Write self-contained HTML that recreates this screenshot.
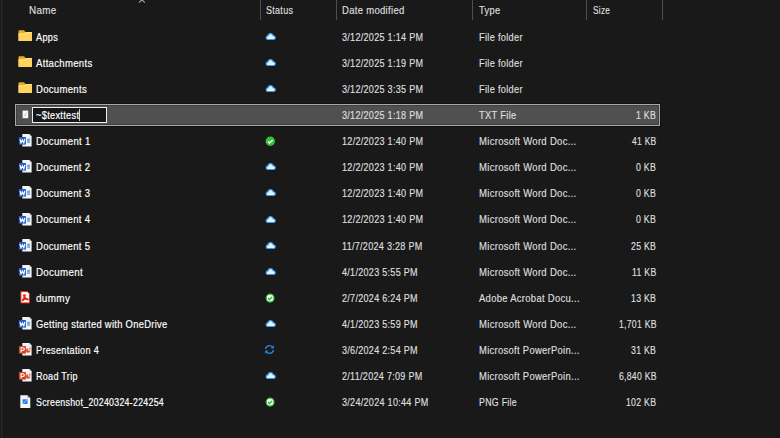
<!DOCTYPE html>
<html><head><meta charset="utf-8">
<style>
html,body{margin:0;padding:0;width:780px;height:438px;overflow:hidden;background:#191919;}
body{position:relative;font-family:"Liberation Sans",sans-serif;font-size:11px;color:#fff;}
.t{position:absolute;white-space:nowrap;line-height:13px;height:13px;transform-origin:0 0;-webkit-text-stroke:0.18px currentColor;letter-spacing:0.35px;}
.h{color:#dedede;}
.n{color:#ffffff;}
.d{color:#dedede;}
.sep{position:absolute;top:0;width:1px;height:20px;background:#4e4e4e;}
.sel{position:absolute;left:15px;top:104px;width:643px;height:20px;border:1px solid #a8a8a8;background:#505050;box-shadow:0 0 0 1px #101010, inset 0 0 0 1px #404040;}
.edit{position:absolute;left:32px;top:107px;width:73px;height:14px;border:1px solid #f0f0f0;background:#171717;}
.caret{position:absolute;left:79px;top:109px;width:1px;height:12px;background:#d8d8d8;}
.ic{position:absolute;display:block;}
</style></head><body>
<div style="position:absolute;left:1px;top:0;width:2px;height:438px;background:#242424"></div>
<div style="position:absolute;left:3px;top:0;width:1px;height:438px;background:#151515"></div>
<svg style="position:absolute;left:137px;top:-3px" width="10" height="8" viewBox="0 0 10 8"><path d="M2 5.6 L4.9 2.7 L7.8 5.6" stroke="#a8a8a8" stroke-width="1.1" fill="none"/></svg>
<div class="sep" style="left:260px"></div>
<div class="sep" style="left:336px"></div>
<div class="sep" style="left:472px"></div>
<div class="sep" style="left:586px"></div>
<div class="sep" style="left:662px"></div>
<div class="t h" style="left:29.0px;top:4px;transform:scaleX(0.899)">Name</div>
<div class="t h" style="left:266.0px;top:4px;transform:scaleX(0.818)">Status</div>
<div class="t h" style="left:342.0px;top:4px;transform:scaleX(0.864)">Date modified</div>
<div class="t h" style="left:479.0px;top:4px;transform:scaleX(0.850)">Type</div>
<div class="t h" style="left:592.5px;top:4px;transform:scaleX(0.757)">Size</div>
<div class="sel"></div>
<div class="edit"></div>
<svg class="ic" style="left:18px;top:30px" width="15" height="12" viewBox="0 0 15 12">
<path d="M0.5 1.2 Q0.5 0.3 1.4 0.3 H6 L7.4 2 H13.2 Q14 2 14 2.8 V10.5 Q14 11 13.4 11 H1.1 Q0.5 11 0.5 10.4Z" fill="#eeab25"/>
<path d="M0.5 3.6 H6.2 L7.8 1.9 H13.2 Q14 1.9 14 2.7 V10.4 Q14 11 13.4 11 H1.1 Q0.5 11 0.5 10.4Z" fill="#ffd45e"/>
<path d="M0.5 3.6 H6.2 L7.8 1.9 H14 V2.7 H8.2 L6.6 4.4 H0.5Z" fill="#ffe494"/>
</svg>
<svg class="ic" style="left:264.5px;top:32.1px" width="12" height="9" viewBox="0 0 12 9">
<path d="M2.4 7.5 A1.85 1.85 0 0 1 2.9 3.9 A2.75 2.75 0 0 1 8.3 3.8 A1.9 1.9 0 0 1 9 7.5 Z" fill="#e4f1ff" stroke="#3b9ae6" stroke-width="1.15"/>
</svg>
<div class="t n" style="left:35.5px;top:31px;transform:scaleX(0.832)">Apps</div>
<div class="t d" style="left:342.0px;top:31px;transform:scaleX(0.822)">3/12/2025 1:14 PM</div>
<div class="t d" style="left:478.5px;top:31px;transform:scaleX(0.840)">File folder</div>
<svg class="ic" style="left:18px;top:56px" width="15" height="12" viewBox="0 0 15 12">
<path d="M0.5 1.2 Q0.5 0.3 1.4 0.3 H6 L7.4 2 H13.2 Q14 2 14 2.8 V10.5 Q14 11 13.4 11 H1.1 Q0.5 11 0.5 10.4Z" fill="#eeab25"/>
<path d="M0.5 3.6 H6.2 L7.8 1.9 H13.2 Q14 1.9 14 2.7 V10.4 Q14 11 13.4 11 H1.1 Q0.5 11 0.5 10.4Z" fill="#ffd45e"/>
<path d="M0.5 3.6 H6.2 L7.8 1.9 H14 V2.7 H8.2 L6.6 4.4 H0.5Z" fill="#ffe494"/>
</svg>
<svg class="ic" style="left:264.5px;top:58.1px" width="12" height="9" viewBox="0 0 12 9">
<path d="M2.4 7.5 A1.85 1.85 0 0 1 2.9 3.9 A2.75 2.75 0 0 1 8.3 3.8 A1.9 1.9 0 0 1 9 7.5 Z" fill="#e4f1ff" stroke="#3b9ae6" stroke-width="1.15"/>
</svg>
<div class="t n" style="left:35.5px;top:57px;transform:scaleX(0.870)">Attachments</div>
<div class="t d" style="left:342.0px;top:57px;transform:scaleX(0.822)">3/12/2025 1:19 PM</div>
<div class="t d" style="left:478.5px;top:57px;transform:scaleX(0.840)">File folder</div>
<svg class="ic" style="left:18px;top:82px" width="15" height="12" viewBox="0 0 15 12">
<path d="M0.5 1.2 Q0.5 0.3 1.4 0.3 H6 L7.4 2 H13.2 Q14 2 14 2.8 V10.5 Q14 11 13.4 11 H1.1 Q0.5 11 0.5 10.4Z" fill="#eeab25"/>
<path d="M0.5 3.6 H6.2 L7.8 1.9 H13.2 Q14 1.9 14 2.7 V10.4 Q14 11 13.4 11 H1.1 Q0.5 11 0.5 10.4Z" fill="#ffd45e"/>
<path d="M0.5 3.6 H6.2 L7.8 1.9 H14 V2.7 H8.2 L6.6 4.4 H0.5Z" fill="#ffe494"/>
</svg>
<svg class="ic" style="left:264.5px;top:84.1px" width="12" height="9" viewBox="0 0 12 9">
<path d="M2.4 7.5 A1.85 1.85 0 0 1 2.9 3.9 A2.75 2.75 0 0 1 8.3 3.8 A1.9 1.9 0 0 1 9 7.5 Z" fill="#e4f1ff" stroke="#3b9ae6" stroke-width="1.15"/>
</svg>
<div class="t n" style="left:35.5px;top:83px;transform:scaleX(0.867)">Documents</div>
<div class="t d" style="left:342.0px;top:83px;transform:scaleX(0.822)">3/12/2025 3:35 PM</div>
<div class="t d" style="left:478.5px;top:83px;transform:scaleX(0.840)">File folder</div>
<svg class="ic" style="left:22px;top:110px" width="7" height="9" viewBox="0 0 7 9">
<rect x="0.6" y="0.6" width="5.6" height="7.6" fill="#fafafa"/>
<path d="M2 6.5 L5 2.5" stroke="#8cc8f0" stroke-width="1"/>
</svg>
<div class="t n" style="left:35.5px;top:109px;transform:scaleX(0.841)">~$texttest</div>
<div class="t d" style="left:342.0px;top:109px;transform:scaleX(0.822)">3/12/2025 1:18 PM</div>
<div class="t d" style="left:478.5px;top:109px;transform:scaleX(0.849)">TXT File</div>
<div class="t d" style="left:636.3px;top:109px;transform:scaleX(0.795)">1 KB</div>
<svg class="ic" style="left:18px;top:134px" width="15" height="14" viewBox="0 0 15 14">
<path d="M4.3 0.1 H11.4 L13.6 2.3 V12.4 H4.3Z" fill="#f4f4f4"/>
<path d="M11.4 0.1 V2.3 H13.6Z" fill="#c4c4c4"/>
<rect x="9.2" y="4.8" width="2.7" height="3.9" fill="#b9d6f5"/>
<rect x="9.2" y="4.8" width="2.7" height="1" fill="#4d94e0"/><rect x="9.2" y="6.3" width="2.7" height="1" fill="#4d94e0"/><rect x="9.2" y="7.8" width="2.7" height="0.9" fill="#4d94e0"/>
<rect x="0.9" y="3" width="7" height="7.6" fill="#1f5dc6"/>
<path d="M2 4.9 L3 8.8 L4.4 5.9 L5.8 8.8 L6.8 4.9" stroke="#fff" stroke-width="1.15" fill="none"/>
</svg>
<svg class="ic" style="left:264.5px;top:136px" width="11" height="11" viewBox="0 0 11 11">
<circle cx="5.3" cy="5.3" r="4.7" fill="#36c13c"/>
<path d="M3 5.6 L4.6 7 L7.6 4" stroke="#fff" stroke-width="1.3" fill="none"/>
</svg>
<div class="t n" style="left:35.5px;top:135px;transform:scaleX(0.869)">Document 1</div>
<div class="t d" style="left:342.0px;top:135px;transform:scaleX(0.822)">12/2/2023 1:40 PM</div>
<div class="t d" style="left:478.5px;top:135px;transform:scaleX(0.864)">Microsoft Word Doc...</div>
<div class="t d" style="left:631.9px;top:135px;transform:scaleX(0.774)">41 KB</div>
<svg class="ic" style="left:18px;top:160px" width="15" height="14" viewBox="0 0 15 14">
<path d="M4.3 0.1 H11.4 L13.6 2.3 V12.4 H4.3Z" fill="#f4f4f4"/>
<path d="M11.4 0.1 V2.3 H13.6Z" fill="#c4c4c4"/>
<rect x="9.2" y="4.8" width="2.7" height="3.9" fill="#b9d6f5"/>
<rect x="9.2" y="4.8" width="2.7" height="1" fill="#4d94e0"/><rect x="9.2" y="6.3" width="2.7" height="1" fill="#4d94e0"/><rect x="9.2" y="7.8" width="2.7" height="0.9" fill="#4d94e0"/>
<rect x="0.9" y="3" width="7" height="7.6" fill="#1f5dc6"/>
<path d="M2 4.9 L3 8.8 L4.4 5.9 L5.8 8.8 L6.8 4.9" stroke="#fff" stroke-width="1.15" fill="none"/>
</svg>
<svg class="ic" style="left:264.5px;top:162.1px" width="12" height="9" viewBox="0 0 12 9">
<path d="M2.4 7.5 A1.85 1.85 0 0 1 2.9 3.9 A2.75 2.75 0 0 1 8.3 3.8 A1.9 1.9 0 0 1 9 7.5 Z" fill="#e4f1ff" stroke="#3b9ae6" stroke-width="1.15"/>
</svg>
<div class="t n" style="left:35.5px;top:161px;transform:scaleX(0.864)">Document 2</div>
<div class="t d" style="left:342.0px;top:161px;transform:scaleX(0.822)">12/2/2023 1:40 PM</div>
<div class="t d" style="left:478.5px;top:161px;transform:scaleX(0.864)">Microsoft Word Doc...</div>
<div class="t d" style="left:636.3px;top:161px;transform:scaleX(0.795)">0 KB</div>
<svg class="ic" style="left:18px;top:186px" width="15" height="14" viewBox="0 0 15 14">
<path d="M4.3 0.1 H11.4 L13.6 2.3 V12.4 H4.3Z" fill="#f4f4f4"/>
<path d="M11.4 0.1 V2.3 H13.6Z" fill="#c4c4c4"/>
<rect x="9.2" y="4.8" width="2.7" height="3.9" fill="#b9d6f5"/>
<rect x="9.2" y="4.8" width="2.7" height="1" fill="#4d94e0"/><rect x="9.2" y="6.3" width="2.7" height="1" fill="#4d94e0"/><rect x="9.2" y="7.8" width="2.7" height="0.9" fill="#4d94e0"/>
<rect x="0.9" y="3" width="7" height="7.6" fill="#1f5dc6"/>
<path d="M2 4.9 L3 8.8 L4.4 5.9 L5.8 8.8 L6.8 4.9" stroke="#fff" stroke-width="1.15" fill="none"/>
</svg>
<svg class="ic" style="left:264.5px;top:188.1px" width="12" height="9" viewBox="0 0 12 9">
<path d="M2.4 7.5 A1.85 1.85 0 0 1 2.9 3.9 A2.75 2.75 0 0 1 8.3 3.8 A1.9 1.9 0 0 1 9 7.5 Z" fill="#e4f1ff" stroke="#3b9ae6" stroke-width="1.15"/>
</svg>
<div class="t n" style="left:35.5px;top:187px;transform:scaleX(0.864)">Document 3</div>
<div class="t d" style="left:342.0px;top:187px;transform:scaleX(0.822)">12/2/2023 1:40 PM</div>
<div class="t d" style="left:478.5px;top:187px;transform:scaleX(0.864)">Microsoft Word Doc...</div>
<div class="t d" style="left:636.3px;top:187px;transform:scaleX(0.795)">0 KB</div>
<svg class="ic" style="left:18px;top:213px" width="15" height="14" viewBox="0 0 15 14">
<path d="M4.3 0.1 H11.4 L13.6 2.3 V12.4 H4.3Z" fill="#f4f4f4"/>
<path d="M11.4 0.1 V2.3 H13.6Z" fill="#c4c4c4"/>
<rect x="9.2" y="4.8" width="2.7" height="3.9" fill="#b9d6f5"/>
<rect x="9.2" y="4.8" width="2.7" height="1" fill="#4d94e0"/><rect x="9.2" y="6.3" width="2.7" height="1" fill="#4d94e0"/><rect x="9.2" y="7.8" width="2.7" height="0.9" fill="#4d94e0"/>
<rect x="0.9" y="3" width="7" height="7.6" fill="#1f5dc6"/>
<path d="M2 4.9 L3 8.8 L4.4 5.9 L5.8 8.8 L6.8 4.9" stroke="#fff" stroke-width="1.15" fill="none"/>
</svg>
<svg class="ic" style="left:264.5px;top:215.1px" width="12" height="9" viewBox="0 0 12 9">
<path d="M2.4 7.5 A1.85 1.85 0 0 1 2.9 3.9 A2.75 2.75 0 0 1 8.3 3.8 A1.9 1.9 0 0 1 9 7.5 Z" fill="#e4f1ff" stroke="#3b9ae6" stroke-width="1.15"/>
</svg>
<div class="t n" style="left:35.5px;top:213px;transform:scaleX(0.864)">Document 4</div>
<div class="t d" style="left:342.0px;top:213px;transform:scaleX(0.822)">12/2/2023 1:40 PM</div>
<div class="t d" style="left:478.5px;top:213px;transform:scaleX(0.864)">Microsoft Word Doc...</div>
<div class="t d" style="left:636.3px;top:213px;transform:scaleX(0.795)">0 KB</div>
<svg class="ic" style="left:18px;top:239px" width="15" height="14" viewBox="0 0 15 14">
<path d="M4.3 0.1 H11.4 L13.6 2.3 V12.4 H4.3Z" fill="#f4f4f4"/>
<path d="M11.4 0.1 V2.3 H13.6Z" fill="#c4c4c4"/>
<rect x="9.2" y="4.8" width="2.7" height="3.9" fill="#b9d6f5"/>
<rect x="9.2" y="4.8" width="2.7" height="1" fill="#4d94e0"/><rect x="9.2" y="6.3" width="2.7" height="1" fill="#4d94e0"/><rect x="9.2" y="7.8" width="2.7" height="0.9" fill="#4d94e0"/>
<rect x="0.9" y="3" width="7" height="7.6" fill="#1f5dc6"/>
<path d="M2 4.9 L3 8.8 L4.4 5.9 L5.8 8.8 L6.8 4.9" stroke="#fff" stroke-width="1.15" fill="none"/>
</svg>
<svg class="ic" style="left:264.5px;top:241.1px" width="12" height="9" viewBox="0 0 12 9">
<path d="M2.4 7.5 A1.85 1.85 0 0 1 2.9 3.9 A2.75 2.75 0 0 1 8.3 3.8 A1.9 1.9 0 0 1 9 7.5 Z" fill="#e4f1ff" stroke="#3b9ae6" stroke-width="1.15"/>
</svg>
<div class="t n" style="left:35.5px;top:240px;transform:scaleX(0.864)">Document 5</div>
<div class="t d" style="left:342.0px;top:240px;transform:scaleX(0.821)">11/7/2024 3:28 PM</div>
<div class="t d" style="left:478.5px;top:240px;transform:scaleX(0.864)">Microsoft Word Doc...</div>
<div class="t d" style="left:631.3px;top:240px;transform:scaleX(0.793)">25 KB</div>
<svg class="ic" style="left:18px;top:265px" width="15" height="14" viewBox="0 0 15 14">
<path d="M4.3 0.1 H11.4 L13.6 2.3 V12.4 H4.3Z" fill="#f4f4f4"/>
<path d="M11.4 0.1 V2.3 H13.6Z" fill="#c4c4c4"/>
<rect x="9.2" y="4.8" width="2.7" height="3.9" fill="#b9d6f5"/>
<rect x="9.2" y="4.8" width="2.7" height="1" fill="#4d94e0"/><rect x="9.2" y="6.3" width="2.7" height="1" fill="#4d94e0"/><rect x="9.2" y="7.8" width="2.7" height="0.9" fill="#4d94e0"/>
<rect x="0.9" y="3" width="7" height="7.6" fill="#1f5dc6"/>
<path d="M2 4.9 L3 8.8 L4.4 5.9 L5.8 8.8 L6.8 4.9" stroke="#fff" stroke-width="1.15" fill="none"/>
</svg>
<svg class="ic" style="left:264.5px;top:267.1px" width="12" height="9" viewBox="0 0 12 9">
<path d="M2.4 7.5 A1.85 1.85 0 0 1 2.9 3.9 A2.75 2.75 0 0 1 8.3 3.8 A1.9 1.9 0 0 1 9 7.5 Z" fill="#e4f1ff" stroke="#3b9ae6" stroke-width="1.15"/>
</svg>
<div class="t n" style="left:35.5px;top:266px;transform:scaleX(0.888)">Document</div>
<div class="t d" style="left:342.0px;top:266px;transform:scaleX(0.821)">4/1/2023 5:55 PM</div>
<div class="t d" style="left:478.5px;top:266px;transform:scaleX(0.864)">Microsoft Word Doc...</div>
<div class="t d" style="left:632.1px;top:266px;transform:scaleX(0.792)">11 KB</div>
<svg class="ic" style="left:20px;top:290.5px" width="11" height="14" viewBox="0 0 11 14">
<path d="M0.9 0.6 H7.3 L9.5 2.8 V11.9 H0.9Z" fill="#fdfdfd" stroke="#e8291d" stroke-width="1"/>
<circle cx="4.4" cy="4.6" r="1.45" fill="#ea2a1e"/>
<path d="M4.4 5.6 Q3.8 7.6 2.6 9.2 Q5.2 7.8 7.9 8.3 Q5.6 7.4 4.4 5.6Z" stroke="#ea2a1e" stroke-width="1.4" fill="#ea2a1e" stroke-linejoin="round"/>
<circle cx="2.9" cy="9.2" r="1.05" fill="#ea2a1e"/><circle cx="7.7" cy="8.4" r="1" fill="#ea2a1e"/>
</svg>
<svg class="ic" style="left:264.5px;top:293px" width="11" height="11" viewBox="0 0 11 11">
<circle cx="5.1" cy="5.1" r="3.9" fill="#f4fff4" stroke="#2fbf36" stroke-width="1.25"/>
<path d="M3.1 5.2 L4.5 6.6 L7.1 3.9" stroke="#23a82a" stroke-width="1.35" fill="none"/>
</svg>
<div class="t n" style="left:35.5px;top:292px;transform:scaleX(0.904)">dummy</div>
<div class="t d" style="left:342.0px;top:292px;transform:scaleX(0.821)">2/7/2024 6:24 PM</div>
<div class="t d" style="left:478.5px;top:292px;transform:scaleX(0.859)">Adobe Acrobat Docu...</div>
<div class="t d" style="left:631.3px;top:292px;transform:scaleX(0.793)">13 KB</div>
<svg class="ic" style="left:18px;top:317px" width="15" height="14" viewBox="0 0 15 14">
<path d="M4.3 0.1 H11.4 L13.6 2.3 V12.4 H4.3Z" fill="#f4f4f4"/>
<path d="M11.4 0.1 V2.3 H13.6Z" fill="#c4c4c4"/>
<rect x="9.2" y="4.8" width="2.7" height="3.9" fill="#b9d6f5"/>
<rect x="9.2" y="4.8" width="2.7" height="1" fill="#4d94e0"/><rect x="9.2" y="6.3" width="2.7" height="1" fill="#4d94e0"/><rect x="9.2" y="7.8" width="2.7" height="0.9" fill="#4d94e0"/>
<rect x="0.9" y="3" width="7" height="7.6" fill="#1f5dc6"/>
<path d="M2 4.9 L3 8.8 L4.4 5.9 L5.8 8.8 L6.8 4.9" stroke="#fff" stroke-width="1.15" fill="none"/>
</svg>
<svg class="ic" style="left:264.5px;top:319.1px" width="12" height="9" viewBox="0 0 12 9">
<path d="M2.4 7.5 A1.85 1.85 0 0 1 2.9 3.9 A2.75 2.75 0 0 1 8.3 3.8 A1.9 1.9 0 0 1 9 7.5 Z" fill="#e4f1ff" stroke="#3b9ae6" stroke-width="1.15"/>
</svg>
<div class="t n" style="left:35.5px;top:318px;transform:scaleX(0.852)">Getting started with OneDrive</div>
<div class="t d" style="left:342.0px;top:318px;transform:scaleX(0.821)">4/1/2023 5:59 PM</div>
<div class="t d" style="left:478.5px;top:318px;transform:scaleX(0.864)">Microsoft Word Doc...</div>
<div class="t d" style="left:618.9px;top:318px;transform:scaleX(0.787)">1,701 KB</div>
<svg class="ic" style="left:18px;top:343px" width="15" height="14" viewBox="0 0 15 14">
<path d="M4.3 0.1 H11.4 L13.6 2.3 V12.4 H4.3Z" fill="#f4f4f4"/>
<path d="M11.4 0.1 V2.3 H13.6Z" fill="#c4c4c4"/>
<path d="M10.1 5.2 A2.3 2.3 0 1 0 12.4 7.5 H10.1Z" fill="#e0502f"/><path d="M10.9 4.4 A2.1 2.1 0 0 1 13 6.6 H10.9Z" fill="#ec7c5c"/>
<rect x="0.9" y="3" width="7" height="7.6" fill="#d04424"/>
<path d="M3.1 9.4 V4.7 H4.9 Q6.3 4.7 6.3 6.1 Q6.3 7.5 4.9 7.5 H3.1" stroke="#fff" stroke-width="1.15" fill="none"/>
</svg>
<svg class="ic" style="left:264px;top:344.3px" width="11" height="11" viewBox="0 0 11 11">
<path d="M1.6 4.8 Q2.2 1.6 5.4 1.6 Q7.6 1.6 8.8 3.4" stroke="#1e88e5" stroke-width="1.4" fill="none"/>
<path d="M9.8 1.2 V4.6 H6.6Z" fill="#1e88e5"/>
<path d="M9.4 6.2 Q8.8 9.4 5.6 9.4 Q3.4 9.4 2.2 7.6" stroke="#1e88e5" stroke-width="1.4" fill="none"/>
<path d="M1.2 9.8 V6.4 H4.4Z" fill="#1e88e5"/>
</svg>
<div class="t n" style="left:35.5px;top:344px;transform:scaleX(0.831)">Presentation 4</div>
<div class="t d" style="left:342.0px;top:344px;transform:scaleX(0.821)">3/6/2024 2:54 PM</div>
<div class="t d" style="left:478.5px;top:344px;transform:scaleX(0.856)">Microsoft PowerPoin...</div>
<div class="t d" style="left:631.3px;top:344px;transform:scaleX(0.793)">31 KB</div>
<svg class="ic" style="left:18px;top:369px" width="15" height="14" viewBox="0 0 15 14">
<path d="M4.3 0.1 H11.4 L13.6 2.3 V12.4 H4.3Z" fill="#f4f4f4"/>
<path d="M11.4 0.1 V2.3 H13.6Z" fill="#c4c4c4"/>
<path d="M10.1 5.2 A2.3 2.3 0 1 0 12.4 7.5 H10.1Z" fill="#e0502f"/><path d="M10.9 4.4 A2.1 2.1 0 0 1 13 6.6 H10.9Z" fill="#ec7c5c"/>
<rect x="0.9" y="3" width="7" height="7.6" fill="#d04424"/>
<path d="M3.1 9.4 V4.7 H4.9 Q6.3 4.7 6.3 6.1 Q6.3 7.5 4.9 7.5 H3.1" stroke="#fff" stroke-width="1.15" fill="none"/>
</svg>
<svg class="ic" style="left:264.5px;top:371.1px" width="12" height="9" viewBox="0 0 12 9">
<path d="M2.4 7.5 A1.85 1.85 0 0 1 2.9 3.9 A2.75 2.75 0 0 1 8.3 3.8 A1.9 1.9 0 0 1 9 7.5 Z" fill="#e4f1ff" stroke="#3b9ae6" stroke-width="1.15"/>
</svg>
<div class="t n" style="left:35.5px;top:370px;transform:scaleX(0.821)">Road Trip</div>
<div class="t d" style="left:342.0px;top:370px;transform:scaleX(0.821)">2/11/2024 7:09 PM</div>
<div class="t d" style="left:478.5px;top:370px;transform:scaleX(0.856)">Microsoft PowerPoin...</div>
<div class="t d" style="left:618.9px;top:370px;transform:scaleX(0.787)">6,840 KB</div>
<svg class="ic" style="left:20px;top:395px" width="11" height="14" viewBox="0 0 11 14">
<path d="M0.3 0.3 H7.5 L10.3 3.1 V13 H0.3Z" fill="#f6f6f6"/>
<path d="M7.5 0.3 V3.1 H10.3Z" fill="#9a9a9a"/>
<rect x="2.6" y="4.3" width="5" height="4.6" fill="#1e7be6"/>
<path d="M3.2 8.4 L6.8 5" stroke="#7fd6ff" stroke-width="1"/>
</svg>
<svg class="ic" style="left:264.5px;top:397px" width="11" height="11" viewBox="0 0 11 11">
<circle cx="5.1" cy="5.1" r="3.9" fill="#f4fff4" stroke="#2fbf36" stroke-width="1.25"/>
<path d="M3.1 5.2 L4.5 6.6 L7.1 3.9" stroke="#23a82a" stroke-width="1.35" fill="none"/>
</svg>
<div class="t n" style="left:35.5px;top:396px;transform:scaleX(0.799)">Screenshot_20240324-224254</div>
<div class="t d" style="left:342.0px;top:396px;transform:scaleX(0.822)">3/24/2024 10:44 PM</div>
<div class="t d" style="left:478.5px;top:396px;transform:scaleX(0.801)">PNG File</div>
<div class="t d" style="left:626.3px;top:396px;transform:scaleX(0.792)">102 KB</div>
<div class="caret"></div>
</body></html>
